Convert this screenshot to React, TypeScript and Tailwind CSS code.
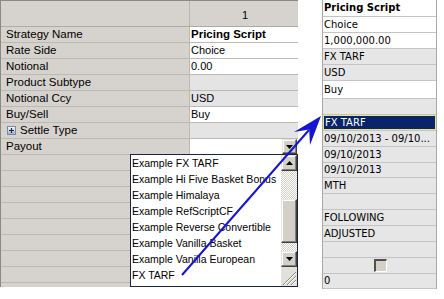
import React from "react";

type Val = { t: string; bold?: boolean; white?: boolean; drop?: boolean };

const labels = [
  "Strategy Name",
  "Rate Side",
  "Notional",
  "Product Subtype",
  "Notional Ccy",
  "Buy/Sell",
  "Settle Type",
  "Payout",
];

const values: Val[] = [
  { t: "Pricing Script", bold: true, white: true },
  { t: "Choice", white: true },
  { t: "0.00", white: true },
  { t: "" },
  { t: "USD" },
  { t: "Buy", white: true },
  { t: "" },
  { t: "", white: true, drop: true },
];

const items = [
  "Example FX TARF",
  "Example Hi Five Basket Bonus",
  "Example Himalaya",
  "Example RefScriptCF",
  "Example Reverse Convertible",
  "Example Vanilla Basket",
  "Example Vanilla European",
  "FX TARF",
];

type RRow = { t: string; h: string; white?: boolean; bold?: boolean; sel?: boolean; check?: boolean };

const rightRows: RRow[] = [
  { t: "Pricing Script", h: "h-[17px]", white: true, bold: true },
  { t: "Choice", h: "h-[16px]", white: true },
  { t: "1,000,000.00", h: "h-[16px]", white: true },
  { t: "FX TARF", h: "h-[16px]" },
  { t: "USD", h: "h-[16px]" },
  { t: "Buy", h: "h-[18px]", white: true },
  { t: "", h: "h-[16px]" },
  { t: "FX TARF", h: "h-[16px]", sel: true },
  { t: "09/10/2013 - 09/10...", h: "h-[16px]" },
  { t: "09/10/2013", h: "h-[16px]" },
  { t: "09/10/2013", h: "h-[15px]" },
  { t: "MTH", h: "h-[16px]" },
  { t: "", h: "h-[16px]" },
  { t: "FOLLOWING", h: "h-[16px]" },
  { t: "ADJUSTED", h: "h-[16px]" },
  { t: "", h: "h-[16px]" },
  { t: "", h: "h-[16px]", check: true },
  { t: "0", h: "h-[15px]" },
];

function DownGlyph() {
  return (
    <svg width="7" height="4" viewBox="0 0 7 4">
      <path d="M0 0 H7 L3.5 4 Z" fill="#000" />
    </svg>
  );
}
function UpGlyph() {
  return (
    <svg width="7" height="4" viewBox="0 0 7 4">
      <path d="M0 4 H7 L3.5 0 Z" fill="#000" />
    </svg>
  );
}

function Btn({ children, cls }: { children?: React.ReactNode; cls: string }) {
  return (
    <div
      className={
        "flex items-center justify-center bg-[#d4d0c8] border border-t-[#e8e6e2] border-l-[#e8e6e2] border-r-[#404040] border-b-[#404040] shadow-[inset_-1px_-1px_#808080,inset_1px_1px_#ffffff] " +
        cls
      }
    >
      {children}
    </div>
  );
}

export default function App() {
  const empties = Array.from({ length: 9 });
  return (
    <div className="relative w-[444px] h-[299px] bg-white overflow-hidden flex items-start font-['Liberation_Sans',Arial,sans-serif] text-[11px] text-black">
      {/* left property grid */}
      <div className="w-[298px] h-[287px] shrink-0 border-l border-t border-[#8c8983] bg-[#d6d3ce] flex flex-col overflow-hidden">
        <div className="h-[26px] shrink-0 flex border-b border-[#aeaba4]">
          <div className="w-[189px] border-r border-[#b8b5ae]" />
          <div className="flex-1 flex items-center justify-center pt-[4px] pl-[2px]">1</div>
        </div>
        {labels.map((l, i) => {
          const v = values[i];
          return (
            <div key={i} className="h-[16px] shrink-0 flex border-b border-[#bcb9b2]">
              <div className="w-[189px] flex items-center pl-[5px] border-r border-[#bcb9b2] leading-none text-[11.5px]">
                {i === 6 && (
                  <span className="w-[9px] h-[9px] mr-[4px] ml-[1px] flex items-center justify-center border border-[#7a8aa6] bg-[linear-gradient(#f4f6fa,#9fb0cc)]">
                    <svg width="7" height="7" viewBox="0 0 7 7">
                      <path d="M1 3.5 H6 M3.5 1 V6" stroke="#1a2a4a" strokeWidth="1.2" />
                    </svg>
                  </span>
                )}
                {l}
              </div>
              <div
                className={
                  "flex-1 relative flex items-center pl-[1px] leading-none whitespace-nowrap " +
                  (v.white ? "bg-white " : "bg-[#e4e4e4] ")
                }
              >
                {v.bold ? (
                  <span className="font-['Liberation_Sans',Arial,sans-serif] font-bold text-[11.5px]">{v.t}</span>
                ) : (
                  <span className="text-[11px]">{v.t}</span>
                )}
                {v.drop && (
                  <Btn cls="absolute right-[1px] top-0 w-[15px] h-[15px]">
                    <DownGlyph />
                  </Btn>
                )}
              </div>
            </div>
          );
        })}
        {empties.map((_, i) => (
          <div key={"e" + i} className="h-[16px] shrink-0 flex border-b border-[#bcb9b2]">
            <div className="w-[189px] ml-[6px]" />
            <div className="flex-1" />
          </div>
        ))}
      </div>

      {/* right column */}
      <div className="ml-[24px] w-[115px] h-[289px] shrink-0 border-l border-r border-[#a8a8a8] flex flex-col font-['DejaVu_Sans',sans-serif] text-[10px]">
        {rightRows.map((r, i) => (
          <div
            key={i}
            className={
              "shrink-0 border-b border-[#c4c4c4] flex " +
              r.h +
              (r.white ? " bg-white" : " bg-[#e6e6e6]")
            }
          >
            {r.sel ? (
              <div className="flex-1 flex items-center pl-[1px] bg-[#0a246a] text-white border border-[#e6e68c] leading-none">
                {r.t}
              </div>
            ) : r.check ? (
              <div className="flex-1 flex items-center justify-center pl-[2px]">
                <div className="w-[13px] h-[13px] bg-[#d4d0c8] border-t-2 border-l-2 border-t-[#505050] border-l-[#505050] border-b border-r border-b-white border-r-white" />
              </div>
            ) : (
              <div
                className={
                  "flex-1 flex items-center pl-[1px] leading-none whitespace-nowrap overflow-hidden " +
                  (r.bold ? "font-bold" : "")
                }
              >
                {r.t}
              </div>
            )}
          </div>
        ))}
      </div>

      {/* dropdown list overlay */}
      <div className="absolute left-[130px] top-[154px] w-[168px] h-[133px] border border-[#1c2540] bg-white flex">
        <div className="flex-1 flex flex-col">
          {items.map((it) => (
            <div key={it} className="h-[16px] shrink-0 flex items-center pl-[1px] leading-none whitespace-nowrap text-[10.5px]">
              {it}
            </div>
          ))}
        </div>
        <div className="w-[16px] flex flex-col">
          <Btn cls="h-[16px] shrink-0">
            <UpGlyph />
          </Btn>
          <div className="h-[28px] shrink-0 bg-[repeating-conic-gradient(#d4d0c8_0%_25%,#ffffff_0%_50%)] bg-[length:2px_2px]" />
          <Btn cls="h-[44px] shrink-0" />
          <div className="h-[8px] shrink-0 bg-[repeating-conic-gradient(#d4d0c8_0%_25%,#ffffff_0%_50%)] bg-[length:2px_2px]" />
          <Btn cls="h-[16px] shrink-0">
            <DownGlyph />
          </Btn>
          <div className="flex-1 bg-[#e2e0da] flex items-end justify-end">
            <svg width="16" height="18" viewBox="0 0 16 18">
              <path d="M15 4 L2 17 M15 8 L6 17 M15 12 L10 17" stroke="#8a877f" strokeWidth="1" />
              <path d="M15 5 L3 17 M15 9 L7 17 M15 13 L11 17" stroke="#ffffff" strokeWidth="1" />
            </svg>
          </div>
        </div>
      </div>

      {/* blue arrow */}
      <svg className="absolute left-0 top-0 pointer-events-none" width="444" height="299" viewBox="0 0 444 299">
        <line x1="182" y1="275" x2="309" y2="130" stroke="#1414d2" strokeWidth="2" />
        <path d="M321 116 L310 145 L309.2 129.6 L294 132 Z" fill="#1414d2" />
      </svg>
    </div>
  );
}
